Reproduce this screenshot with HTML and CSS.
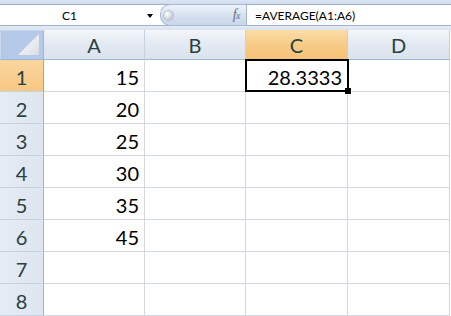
FILE: index.html
```html
<!DOCTYPE html>
<html>
<head>
<meta charset="utf-8">
<link rel="stylesheet" href="styles.css">
</head>
<body>
<div class="app">
  <div class="topband"></div>
  <div class="fbar">
    <div class="namebox"><span class="ref">C1</span><span class="arrow"></span></div>
    <div class="fxzone">
      <div class="pill"><span class="knob"></span><span class="fx">f<span class="sub">x</span></span></div>
    </div>
    <div class="formula">=AVERAGE(A1:A6)</div>
  </div>
  <div class="gap"></div>
  <div class="sheet">
    <div class="corner"><svg width="22" height="22" viewBox="0 0 22 22"><defs><linearGradient id="tg" x1="0" y1="0" x2="1" y2="1"><stop offset="0" stop-color="#ffffff"/><stop offset="1" stop-color="#d9dde3"/></linearGradient></defs><polygon points="0,21 21,21 21,0" fill="url(#tg)"/></svg></div>
    <div class="ch">A</div><div class="ch">B</div><div class="ch sel">C</div><div class="ch">D</div>

    <div class="rh sel">1</div><div class="c num">15</div><div class="c"></div><div class="c num">28.3333</div><div class="c"></div>
    <div class="rh">2</div><div class="c num">20</div><div class="c"></div><div class="c"></div><div class="c"></div>
    <div class="rh">3</div><div class="c num">25</div><div class="c"></div><div class="c"></div><div class="c"></div>
    <div class="rh">4</div><div class="c num">30</div><div class="c"></div><div class="c"></div><div class="c"></div>
    <div class="rh">5</div><div class="c num">35</div><div class="c"></div><div class="c"></div><div class="c"></div>
    <div class="rh">6</div><div class="c num">45</div><div class="c"></div><div class="c"></div><div class="c"></div>
    <div class="rh">7</div><div class="c"></div><div class="c"></div><div class="c"></div><div class="c"></div>
    <div class="rh">8</div><div class="c"></div><div class="c"></div><div class="c"></div><div class="c"></div>

    <div class="selection"><span class="handle"></span></div>
  </div>
</div>
</body>
</html>
```
FILE: styles.css
```css
html, body {
  margin: 0;
  padding: 0;
  background: #ffffff;
  overflow: hidden;
}
.app {
  width: 451px;
  height: 316px;
  display: flex;
  flex-direction: column;
  font-family: Lato, "Liberation Sans", sans-serif;
}
.topband {
  height: 4px;
  background: linear-gradient(#dbe6f4, #cfdcee);
}
.fbar {
  height: 20px;
  border-top: 1px solid #9db1cc;
  border-bottom: 1px solid #9db1cc;
  display: flex;
  background: #ffffff;
}
.namebox {
  width: 157px;
  display: flex;
  align-items: center;
  position: relative;
  font-size: 12px;
  color: #000;
}
.ref {
  flex: 1;
  text-align: center;
  padding-left: 0;
  margin-right: 8px;
}
.arrow {
  width: 0;
  height: 0;
  border-left: 3.5px solid transparent;
  border-right: 3.5px solid transparent;
  border-top: 4px solid #000;
  margin-right: 4px;
  margin-top: 1px;
}
.fxzone {
  width: 86px;
  display: flex;
  padding-left: 3px;
  border-right: 1px solid #a5b7cf;
  background: #ffffff;
}
.pill {
  flex: 1;
  display: flex;
  align-items: center;
  justify-content: space-between;
  border-radius: 10px 0 0 10px;
  border: 1px solid #a9bbd2;
  border-right: none;
  background: linear-gradient(#eef3fa, #d3dfee 60%, #c9d7ea);
  padding: 0 6px 0 3px;
  margin: -1px 0;
}
.knob {
  width: 9px;
  height: 9px;
  border-radius: 50%;
  background: radial-gradient(circle at 35% 35%, #ffffff, #c3cbd6 70%, #9aa6b5);
  box-shadow: 0 0 0 1px #b7c3d2;
}
.fx {
  font-family: "Liberation Serif", serif;
  font-style: italic;
  font-size: 14px;
  color: #5e6f85;
  letter-spacing: -0.5px;
}
.fx .sub {
  font-size: 10px;
}
.formula {
  flex: 1;
  display: flex;
  align-items: center;
  padding-left: 8px;
  font-size: 12px;
  color: #000;
}
.gap {
  height: 4px;
  background: linear-gradient(#e4ebf5, #dae3ef);
}
.sheet {
  position: relative;
  display: grid;
  grid-template-columns: 44px 101px 101px 102px 102px;
  grid-template-rows: 30px repeat(8, 32px);
  font-size: 20px;
}
.corner {
  background: #b4cae8;
  border: 1px solid #c9d7ea;
  border-right-color: #9eb6ce;
  border-bottom-color: #9eb6ce;
  box-sizing: border-box;
  display: flex;
  align-items: flex-end;
  justify-content: flex-end;
  padding: 0 3px 3px 0;
}
.corner svg {
  display: block;
}
.ch {
  box-sizing: border-box;
  background: linear-gradient(#f3f6fa, #e3e9f2 50%, #dae2ed);
  border-right: 1px solid #c5d2e2;
  border-bottom: 1px solid #9eb6ce;
  display: flex;
  align-items: center;
  justify-content: center;
  color: #27413e;
  padding-top: 1px;
}
.ch.sel {
  background: linear-gradient(#fbdca9, #f8cb87 50%, #f6c279);
  border-bottom-color: #f29436;
  border-right-color: #f2c78a;
}
.rh {
  box-sizing: border-box;
  background: linear-gradient(90deg, #e6ecf5, #dde5f0);
  border-right: 1px solid #9eb6ce;
  border-bottom: 1px solid #c5d2e2;
  display: flex;
  align-items: center;
  justify-content: center;
  color: #27413e;
  padding-top: 2px;
}
.rh.sel {
  background: linear-gradient(#fad6a0, #f8c882);
  border-right-color: #f29436;
}
.c {
  box-sizing: border-box;
  border-right: 1px solid #d0d7e5;
  border-bottom: 1px solid #d0d7e5;
  background: #ffffff;
  color: #000;
}
.num {
  display: flex;
  align-items: center;
  justify-content: flex-end;
  padding: 2px 5px 0 0;
}
.selection {
  position: absolute;
  left: 245px;
  top: 29px;
  width: 104px;
  height: 33px;
  box-sizing: border-box;
  border: 2px solid #000;
  pointer-events: none;
}
.handle {
  position: absolute;
  right: -5px;
  bottom: -5px;
  width: 6px;
  height: 6px;
  background: #000;
  border: 1px solid #fff;
  border-top: none;
  border-left: none;
}
```
